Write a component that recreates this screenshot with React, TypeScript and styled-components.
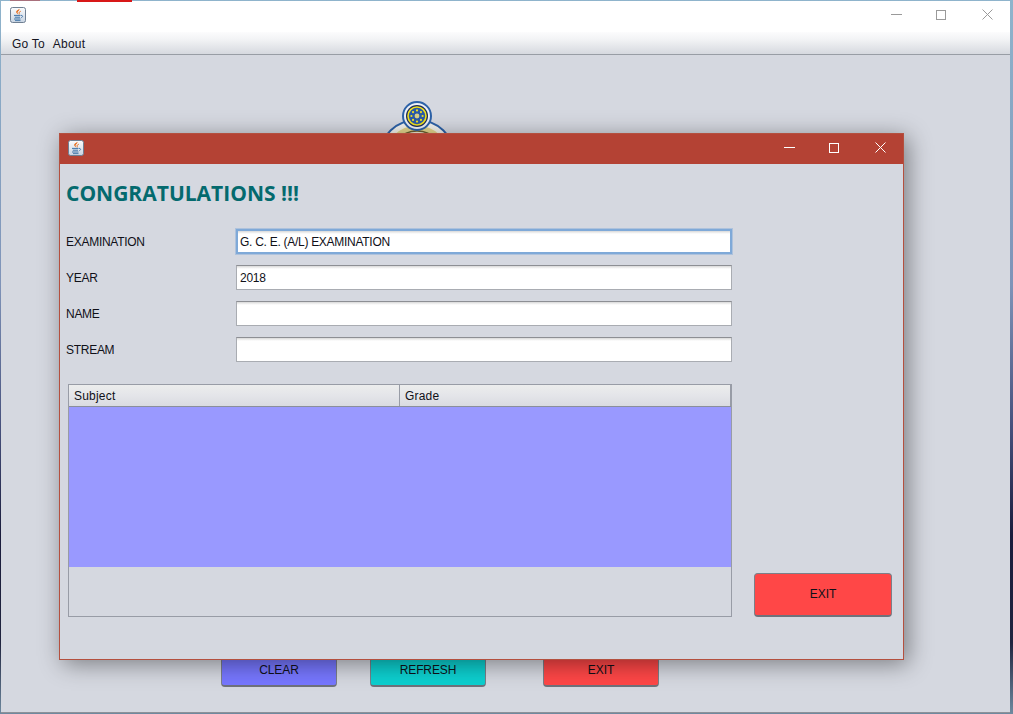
import styled, { createGlobalStyle } from 'styled-components'

const GlobalStyle = createGlobalStyle`
  html, body {
    margin: 0;
    padding: 0;
    overflow: hidden;
  }
  body {
    font-family: 'Liberation Sans', Arial, sans-serif;
    font-size: 12px;
    color: #111;
  }
`

// The picture behind the app window only shows as a thin strip round it
const Desktop = styled.div`
  position: relative;
  width: 1013px;
  height: 714px;
  padding: 1px 3px 1px 1px;
  box-sizing: border-box;
  overflow: hidden;
  background: linear-gradient(
    180deg,
    #8fb4cc 0%,
    #7f93b8 40%,
    #46507c 60%,
    #1a1c3c 75%,
    #20243f 90%,
    #6f8aa0 100%
  );
`

const RedMark = styled.div<{ $left: number; $width: number; $dim?: boolean }>`
  position: absolute;
  top: 0;
  left: ${p => p.$left}px;
  width: ${p => p.$width}px;
  height: ${p => (p.$dim ? 1 : 2)}px;
  background: ${p => (p.$dim ? '#a8707c' : '#d81818')};
`

const AppWindow = styled.div`
  display: flex;
  flex-direction: column;
  height: 100%;
  background: #d5d8e0;
  border-bottom: 1px solid #8e9198;
  box-sizing: border-box;
`

const AppTitleBar = styled.div`
  display: flex;
  align-items: center;
  justify-content: space-between;
  box-sizing: border-box;
  height: 31px;
  padding: 0 17px 3px 9px;
  flex-shrink: 0;
  background: #fff;
`

const MenuBar = styled.div`
  display: flex;
  align-items: center;
  gap: 8px;
  box-sizing: border-box;
  height: 23px;
  padding: 2px 0 0 11px;
  flex-shrink: 0;
  border-bottom: 1px solid #989da5;
  background: linear-gradient(180deg, #fcfcfd 0%, #f2f3f5 35%, #d6d9df 100%);
`

const MenuItem = styled.span`
  font-size: 12px;
  letter-spacing: 0.2px;
  color: #15151f;
`

const WindowButtons = styled.div`
  display: flex;
  align-items: flex-start;
  gap: 33px;
  height: 12px;
`

const CloseGlyph = styled.svg`
  margin-left: 3px;
`

const BackContent = styled.div`
  flex: 1;
  display: flex;
  flex-direction: column;
  padding-top: 45px;
  padding-bottom: 25px;
`

const EmblemSlot = styled.div`
  margin-left: 376px;
  width: 80px;
  height: 90px;
`

const BackButtons = styled.div`
  display: flex;
  margin-top: auto;
  padding-left: 220px;
`

const ActionButton = styled.button<{ $color: string; $left?: number }>`
  width: 116px;
  height: 30px;
  margin-left: ${p => p.$left ?? 0}px;
  padding: 0 0 3px;
  border: 1px solid #7c7f88;
  border-bottom: 2px solid #6f727b;
  border-radius: 4px;
  background: ${p => p.$color};
  font-family: 'Liberation Sans', Arial, sans-serif;
  font-size: 12px;
  letter-spacing: -0.1px;
  color: #101018;
`

const Dialog = styled.div`
  position: absolute;
  left: 59px;
  top: 133px;
  width: 845px;
  height: 527px;
  box-sizing: border-box;
  display: flex;
  flex-direction: column;
  background: #d5d8e0;
  border: 1px solid #b4503f;
  box-shadow: 4px 4px 22px rgba(0, 0, 0, 0.42);
`

const DialogTitleBar = styled.div`
  display: flex;
  align-items: center;
  justify-content: space-between;
  box-sizing: border-box;
  height: 30px;
  padding: 0 17px 2px 8px;
  flex-shrink: 0;
  background: #b44234;
`

const DialogBody = styled.div`
  flex: 1;
  display: flex;
  padding: 0 11px 42px 6px;
  min-height: 0;
`

const FormColumn = styled.div`
  display: flex;
  flex-direction: column;
  width: 666px;
`

const Heading = styled.h1`
  margin: 15px 0 0;
  height: 50px;
  font-family: 'Open Sans', 'Noto Sans', sans-serif;
  font-size: 21px;
  line-height: 28px;
  font-weight: 700;
  color: #046a6e;
`

const Fields = styled.div`
  display: flex;
  flex-direction: column;
  gap: 11px;
`

const FieldRow = styled.label`
  display: grid;
  grid-template-columns: 170px 496px;
  align-items: center;
  height: 25px;
  font-size: 12px;
  letter-spacing: -0.28px;
  color: #101018;
`

const TextField = styled.input<{ $focused?: boolean }>`
  box-sizing: border-box;
  width: 100%;
  height: 25px;
  padding: 0 3px;
  border: ${p => (p.$focused ? '2px solid #7fa9d8' : '1px solid #a9acb2')};
  border-top-color: ${p => (p.$focused ? '#7fa9d8' : '#8d8f94')};
  box-shadow: ${p => (p.$focused ? '0 0 0 1px rgba(127, 169, 216, 0.45)' : 'none')};
  outline: none;
  background: linear-gradient(180deg, #d8d8d8 0, #f4f4f4 2px, #fff 3px);
  font-family: 'Liberation Sans', Arial, sans-serif;
  font-size: 12px;
  letter-spacing: -0.28px;
  color: #101018;
  padding-left: ${p => (p.$focused ? 2 : 3)}px;
`

const ResultTable = styled.div`
  display: flex;
  flex-direction: column;
  box-sizing: border-box;
  margin: 22px 0 0 2px;
  width: 664px;
  height: 233px;
  border: 1px solid #989ca6;
`

const TableHead = styled.div`
  display: grid;
  grid-template-columns: 331px 1fr;
  height: 22px;
  flex-shrink: 0;
  box-sizing: border-box;
  border-bottom: 1px solid #8a8f9b;
  background: linear-gradient(180deg, #eceded 0%, #e4e5e9 50%, #d9dbe1 100%);
`

const HeadCell = styled.div`
  display: flex;
  align-items: center;
  padding-left: 5px;
  font-size: 12px;
  letter-spacing: 0.2px;
  color: #101018;
  border-right: 1px solid #989ca6;
`

const TableRows = styled.div`
  height: 160px;
  flex-shrink: 0;
  background: #9999ff;
`

const SideColumn = styled.div`
  display: flex;
  flex-direction: column;
  justify-content: flex-end;
  margin-left: 22px;
`

const DialogExit = styled(ActionButton)`
  width: 138px;
  height: 44px;
  padding: 0 0 1px;
`

const JavaIcon = () => (
  <svg width="16" height="16" viewBox="0 0 16 16">
    <defs>
      <linearGradient id="javaBg" x1="0" y1="0" x2="0" y2="1">
        <stop offset="0" stopColor="#fbfbfc" />
        <stop offset="1" stopColor="#c8d4e2" />
      </linearGradient>
    </defs>
    <rect x="0.5" y="0.5" width="15" height="15" rx="2" fill="url(#javaBg)" stroke="#6f7f92" />
    <path d="M9.4 1.8c.8 1.6-2.8 2.6-1.6 4.6.2.4.5.7.8 1-2-.8-3.2-2.2-1.9-3.6.8-.8 2.2-1 2.7-2z" fill="#e5640f" />
    <path d="M10.8 4.2c-1.3.6-2.1 1.2-1.6 2.2.2.3.2.6.1 1" fill="none" stroke="#e5640f" strokeWidth="0.9" />
    <path d="M4 8.4h6.5M4.8 10.2h5.2M4 12h6.5" stroke="#3f74a8" strokeWidth="1" />
    <path d="M11 8.4c2-.4 2.2 1.8.2 2.2M5 13.6h5.5" fill="none" stroke="#3f74a8" strokeWidth="0.9" />
  </svg>
)

const WindowGlyphs = ({ color }: { color: string }) => (
  <WindowButtons>
    <svg width="11" height="11" viewBox="0 0 11 11">
      <path d="M0 5.5h11" stroke={color} />
    </svg>
    <svg width="11" height="11" viewBox="0 0 11 11">
      <rect x="1.5" y="1.5" width="9" height="9" fill="none" stroke={color} />
    </svg>
    <CloseGlyph width="11" height="11" viewBox="0 0 11 11">
      <path d="M0.5 0.5l10 10M10.5 0.5l-10 10" stroke={color} />
    </CloseGlyph>
  </WindowButtons>
)

const Emblem = () => (
  <svg width="80" height="90" viewBox="0 0 80 90">
    <ellipse cx="40" cy="55" rx="37" ry="35" fill="#f4f4f0" stroke="#2d62a8" strokeWidth="2" />
    <ellipse cx="40" cy="57" rx="33" ry="32" fill="#e6d88e" stroke="#f7f5e6" strokeWidth="1.5" />
    <ellipse cx="40" cy="60" rx="28" ry="29" fill="#f3eed8" stroke="#6e6230" strokeWidth="1.5" />
    <ellipse cx="40" cy="66" rx="21" ry="30" fill="#5b5330" />
    <circle cx="40" cy="16" r="14" fill="#eef2f8" stroke="#2d62a8" strokeWidth="2" />
    <circle cx="40" cy="16" r="11" fill="#1c2c5c" />
    <circle cx="40" cy="16" r="9" fill="#2a5aa8" stroke="#f2e21e" strokeWidth="1.6" />
    <circle cx="40" cy="16" r="2.4" fill="#d8d08a" />
    {[0, 45, 90, 135, 180, 225, 270, 315].map(a => (
      <circle
        key={a}
        cx={40 + 5.6 * Math.cos((a * Math.PI) / 180)}
        cy={16 + 5.6 * Math.sin((a * Math.PI) / 180)}
        r="1.1"
        fill="#f2e21e"
      />
    ))}
  </svg>
)

export default function App() {
  return (
    <Desktop>
      <GlobalStyle />
      <RedMark $left={10} $width={30} $dim />
      <RedMark $left={77} $width={55} />
      <AppWindow>
        <AppTitleBar>
          <JavaIcon />
          <WindowGlyphs color="#9a9a9a" />
        </AppTitleBar>
        <MenuBar>
          <MenuItem>Go To</MenuItem>
          <MenuItem>About</MenuItem>
        </MenuBar>
        <BackContent>
          <EmblemSlot>
            <Emblem />
          </EmblemSlot>
          <BackButtons>
            <ActionButton $color="#7777ff">CLEAR</ActionButton>
            <ActionButton $left={33} $color="#0dd0d0">REFRESH</ActionButton>
            <ActionButton $left={57} $color="#ff4747">EXIT</ActionButton>
          </BackButtons>
        </BackContent>
      </AppWindow>

      <Dialog>
        <DialogTitleBar>
          <JavaIcon />
          <WindowGlyphs color="#ffffff" />
        </DialogTitleBar>
        <DialogBody>
          <FormColumn>
            <Heading>CONGRATULATIONS !!!</Heading>
            <Fields>
              <FieldRow>
                EXAMINATION
                <TextField $focused readOnly value="G. C. E. (A/L) EXAMINATION" />
              </FieldRow>
              <FieldRow>
                YEAR
                <TextField readOnly value="2018" />
              </FieldRow>
              <FieldRow>
                NAME
                <TextField readOnly value="" />
              </FieldRow>
              <FieldRow>
                STREAM
                <TextField readOnly value="" />
              </FieldRow>
            </Fields>
            <ResultTable>
              <TableHead>
                <HeadCell>Subject</HeadCell>
                <HeadCell>Grade</HeadCell>
              </TableHead>
              <TableRows />
            </ResultTable>
          </FormColumn>
          <SideColumn>
            <DialogExit $color="#ff4747">EXIT</DialogExit>
          </SideColumn>
        </DialogBody>
      </Dialog>
    </Desktop>
  )
}
